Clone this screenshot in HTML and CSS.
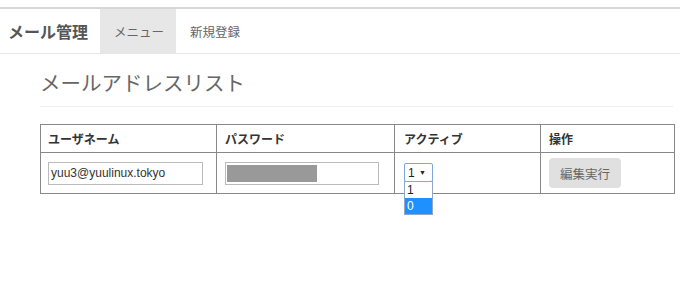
FILE: index.html
```html
<!DOCTYPE html>
<html lang="ja">
<head>
<meta charset="utf-8">
<link rel="stylesheet" href="styles.css">
</head>
<body>
<nav class="navbar">
  <div class="brand">メール管理</div>
  <div class="nav-item active">メニュー</div>
  <div class="nav-item">新規登録</div>
</nav>
<main class="container">
  <h1 class="title">メールアドレスリスト</h1>
  <table class="list">
    <thead>
      <tr>
        <th class="c1">ユーザネーム</th>
        <th class="c2">パスワード</th>
        <th class="c3">アクティブ</th>
        <th class="c4">操作</th>
      </tr>
    </thead>
    <tbody>
      <tr>
        <td class="c1"><div class="field">yuu3@yuulinux.tokyo</div></td>
        <td class="c2"><div class="field pw"><span class="mask"></span></div></td>
        <td class="c3">
          <div class="select-wrap">
            <div class="select">1 <span class="arrow">▼</span></div>
            <div class="options">
              <div class="opt">1</div>
              <div class="opt sel">0</div>
            </div>
          </div>
        </td>
        <td class="c4"><div class="btn">編集実行</div></td>
      </tr>
    </tbody>
  </table>
</main>
</body>
</html>
```

FILE: styles.css
```css
* { box-sizing: border-box; }
html, body { margin: 0; padding: 0; background: #fff; }
body {
  min-height: 297px;
  padding-top: 7px;
  font-family: "Noto Sans CJK JP", "Noto Sans", sans-serif;
  color: #333;
}
.navbar {
  display: flex;
  align-items: stretch;
  height: 47px;
  border-top: 2px solid #d6d6d6;
  border-bottom: 1px solid #e7e7e7;
  background: #fff;
}
.brand {
  display: flex;
  align-items: center;
  width: 100px;
  padding: 0 0 0 8px;
  font-size: 16px;
  font-weight: bold;
  color: #555;
  white-space: nowrap;
}
.nav-item {
  display: flex;
  align-items: center;
  padding: 0 13px 0 14px;
  font-size: 12.5px;
  color: #666;
  white-space: nowrap;
}
.nav-item.active { background: #e7e7e7; width: 76px; }
.container { padding: 0 7px 60px 40px; }
.title {
  margin: 13px 0 0;
  padding-bottom: 9px;
  border-bottom: 1px solid #eee;
  font-size: 20.5px;
  font-weight: normal;
  color: #666;
  line-height: 30px;
}
.list {
  margin-top: 17px;
  width: 634px;
  table-layout: fixed;
  border-collapse: collapse;
  border: 1px solid #555;
  font-size: 12px;
}
.list th, .list td {
  border: 1px solid #888;
  text-align: left;
  padding: 0 4px 0 8px;
}
.list .c1 { width: 176px; padding-left: 7px; }
.list .c2 { width: 178px; }
.list .c3 { width: 146px; padding-left: 9px; }
.list .c4 { width: 134px; }
.list th {
  height: 28px;
  font-weight: bold;
  color: #333;
}
.list td { height: 41px; }
.field {
  width: 155px;
  height: 23px;
  border: 1px solid #bbb;
  font-family: "Liberation Sans", Arial, sans-serif;
  font-size: 12px;
  color: #333;
  line-height: 21px;
  padding-left: 2px;
}
.field.pw { width: 154px; padding: 2px 1px; }
.mask { display: block; width: 90px; height: 17px; background: #999; }
.select-wrap { position: relative; width: 29px; height: 19px; margin-top: -2px; }
.select {
  width: 29px;
  height: 19px;
  border: 1px solid #7aa7e0;
  border-radius: 2px;
  font-family: "Liberation Sans", Arial, sans-serif;
  font-size: 12px;
  line-height: 17px;
  padding-left: 3px;
  color: #222;
  white-space: nowrap;
}
.arrow { font-size: 7px; vertical-align: 2px; margin-left: 1px; }
.options {
  position: absolute;
  top: 18px;
  left: 0;
  width: 29px;
  height: 34px;
  border: 1px solid #8fa8c8;
  background: #fff;
  font-family: "Liberation Sans", Arial, sans-serif;
  font-size: 12px;
  z-index: 5;
}
.opt { display: block; height: 16px; line-height: 16px; padding-left: 2px; color: #222; background: #fff; }
.opt.sel { background: #1e90ff; color: #fff; }
.btn {
  display: inline-flex;
  align-items: center;
  justify-content: center;
  width: 72px;
  height: 30px;
  border-radius: 4px;
  background: #e0e0e0;
  color: #666;
  font-size: 12.5px;
}
```
